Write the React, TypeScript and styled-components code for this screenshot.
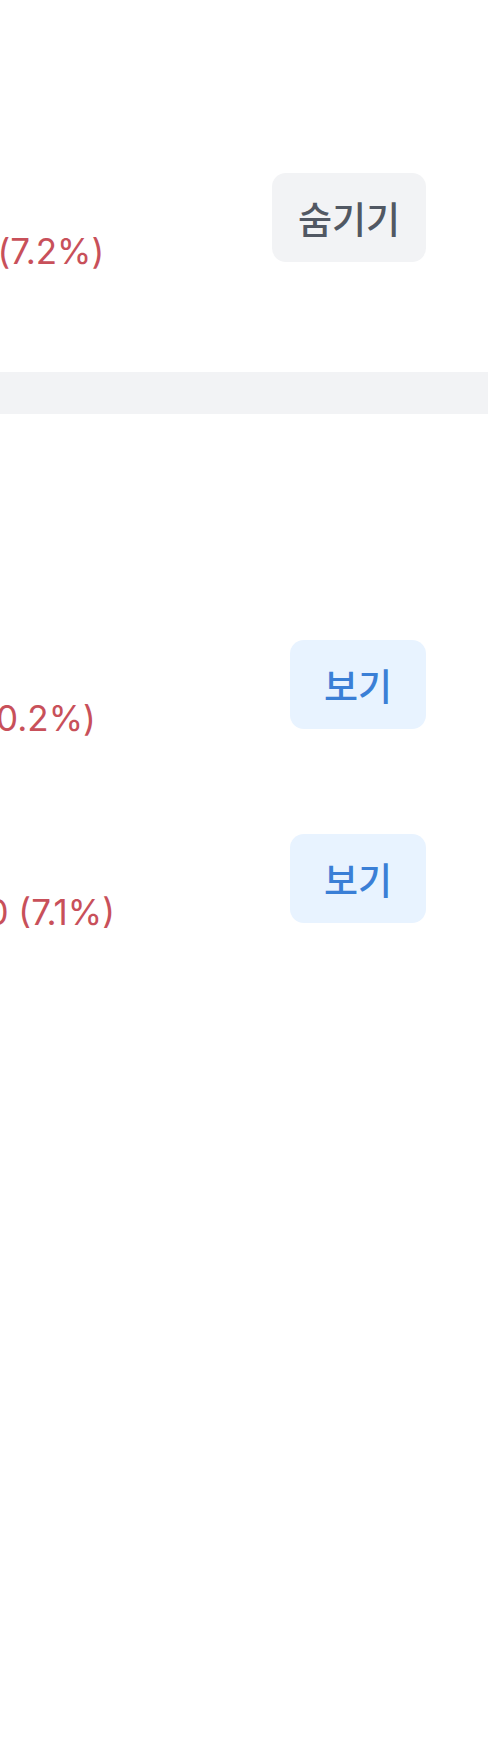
import React from "react";
import styled, { createGlobalStyle } from "styled-components";

const GlobalStyle = createGlobalStyle`
  html, body {
    margin: 0;
    padding: 0;
    background: #ffffff;
  }
  body {
    font-family: "Inter", "Noto Sans CJK KR", sans-serif;
    overflow-x: hidden;
  }
  #root {
    min-height: 100vh;
  }
`;

const Page = styled.div`
  width: 488px;
  min-height: 1741px;
  background: #ffffff;
  display: flex;
  flex-direction: column;
  overflow: hidden;
`;

const Section = styled.section<{ $top: number; $bottom: number }>`
  display: flex;
  flex-direction: column;
  gap: 95px;
  padding: ${(p) => p.$top}px 62px ${(p) => p.$bottom}px 0;
`;

const Band = styled.div`
  height: 42px;
  background: #f2f3f5;
`;

const Row = styled.div`
  display: flex;
  align-items: flex-start;
  justify-content: space-between;
`;

const Info = styled.div`
  display: flex;
  flex-direction: column;
  padding-top: 15px;
  margin-left: -178px;
  white-space: nowrap;
`;

const Title = styled.div`
  font-size: 35px;
  line-height: 42px;
  font-weight: 700;
  color: #191f28;
  font-family: "Inter", "Noto Sans CJK KR", sans-serif;
`;

const Amount = styled.div`
  font-size: 35px;
  line-height: 42px;
  font-weight: 400;
  color: #c8505a;
  font-family: "Inter", "Noto Sans CJK KR", sans-serif;
`;

const ActionButton = styled.button<{ $tone: "grey" | "blue" }>`
  flex-shrink: 0;
  height: 89px;
  min-width: 136px;
  padding: 0 26px;
  border: none;
  border-radius: 14px;
  display: flex;
  align-items: center;
  justify-content: center;
  font-family: "Noto Sans CJK KR", "Inter", sans-serif;
  font-size: 37px;
  font-weight: 500;
  background: ${(p) => (p.$tone === "grey" ? "#f2f3f5" : "#e8f3ff")};
  color: ${(p) => (p.$tone === "grey" ? "#515863" : "#3a7fd6")};
  cursor: pointer;
`;

type Holding = {
  name: string;
  amount: string;
  hidden: boolean;
};

const first: Holding = { name: "삼성전자", amount: "+12,345원 (7.2%)", hidden: false };
const others: Holding[] = [
  { name: "카카오", amount: "+1,010원 (10.2%)", hidden: true },
  { name: "네이버", amount: "+1,234,560 (7.1%)", hidden: true },
];

function HoldingRow({ item }: { item: Holding }) {
  return (
    <Row>
      <Info>
        <Title>{item.name}</Title>
        <Amount>{item.amount}</Amount>
      </Info>
      <ActionButton $tone={item.hidden ? "blue" : "grey"}>
        {item.hidden ? "보기" : "숨기기"}
      </ActionButton>
    </Row>
  );
}

export default function App() {
  return (
    <>
      <GlobalStyle />
      <Page>
        <Section $top={173} $bottom={100}>
          <HoldingRow item={first} />
        </Section>
        <Band />
        <Section $top={226} $bottom={0}>
          {others.map((o) => (
            <HoldingRow key={o.name} item={o} />
          ))}
        </Section>
      </Page>
    </>
  );
}
